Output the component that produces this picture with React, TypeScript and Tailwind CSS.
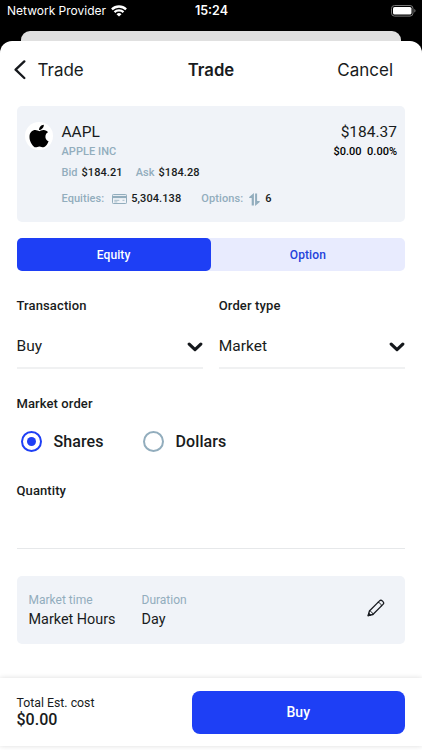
import React, { useState } from 'react';
import { FaApple } from 'react-icons/fa';

const WifiIcon = () => (
  <svg className="ml-[5px] h-[12px] w-[16px]" viewBox="0 0 16 12" fill="none" stroke="white" strokeWidth="2.3">
    <path d="M0.9 4.4a10.2 10.2 0 0 1 14.2 0" />
    <path d="M3.5 7.2a6.5 6.5 0 0 1 9 0" />
    <path d="M8 11.6 5.5 9.2a3.5 3.5 0 0 1 5 0Z" fill="white" stroke="none" />
  </svg>
);

const BatteryIcon = () => (
  <svg className="h-[12px] w-[25px]" viewBox="0 0 25 12" fill="none">
    <rect x="0.5" y="0.5" width="21.5" height="10.6" rx="3" stroke="#777" />
    <rect x="2" y="2" width="18.5" height="7.6" rx="1.6" fill="white" />
    <path d="M23.3 4v3.6c.8-.3 1.2-1 1.2-1.8s-.4-1.5-1.2-1.8Z" fill="#777" />
  </svg>
);

const CardIcon = () => (
  <svg className="h-[10px] w-[15px]" viewBox="0 0 15 10" fill="none" stroke="#92adbd">
    <rect x="0.5" y="0.5" width="14" height="9" rx="0.8" />
    <path d="M0.5 3h14" strokeWidth="2.2" />
    <path d="M2.3 6.3h5M2.3 7.9h3M10.5 6.3h2" strokeWidth="0.8" />
  </svg>
);

const SwapIcon = () => (
  <svg className="h-[13px] w-[11px]" viewBox="0 0 11 13" fill="#92adbd">
    <path d="M4.9 0v12.4H2.7V5H0.2V4Z" />
    <path d="M6.1 13V0.6h2v7.4h2.6V9Z" />
  </svg>
);

const ChevronIcon = () => (
  <svg className="h-[10px] w-[16px]" viewBox="0 0 16 10" fill="none" stroke="#15181c" strokeWidth="3.2" strokeLinecap="round" strokeLinejoin="round">
    <path d="M2.2 2.1 8 7.6l5.8-5.5" />
  </svg>
);

const PencilIcon = () => (
  <svg className="h-[18px] w-[18px]" viewBox="0 0 18 18" fill="none" stroke="#181b20" strokeWidth="1.3" strokeLinejoin="round" strokeLinecap="round">
    <path d="M1.2 16.6 2.4 12 12.5 1.9a2 2 0 0 1 2.8 0l.7.7a2 2 0 0 1 0 2.8L5.9 15.5Z" />
    <path d="M11 3.4c1.9.2 3.2 1.5 3.5 3.5M2.4 12c1.9.2 3.1 1.5 3.5 3.5" strokeWidth="1" />
    <path d="M1.2 16.6l.6-2.2 1.7 1.7Z" fill="#181b20" />
  </svg>
);

const SelectField: React.FC<{ label: string; value: string }> = ({ label, value }) => (
  <div className="flex-1">
    <div className="text-[13px] leading-4 font-medium tracking-[0.12px]">{label}</div>
    <button className="mt-[19px] flex h-[36px] w-full items-center justify-between border-b-2 border-[#f0f1f2] pb-[7px] text-[15.5px]">
      <span className="pt-px">{value}</span>
      <ChevronIcon />
    </button>
  </div>
);

const Radio: React.FC<{ label: string; checked: boolean; onSelect: () => void }> = ({ label, checked, onSelect }) => (
  <button role="radio" aria-checked={checked} onClick={onSelect} className="flex w-[122px] items-center">
    <span className={checked
      ? 'flex size-[21px] items-center justify-center rounded-full border-2 border-[#1e3ff5]'
      : 'flex size-[21px] items-center justify-center rounded-full border-2 border-[#92adbd]'}
    >
      {checked && <span className="size-[9px] rounded-full bg-[#1e3ff5]" />}
    </span>
    <span className="ml-3 pt-px text-[16px] font-medium tracking-[0.1px]">{label}</span>
  </button>
);

const App: React.FC = () => {
  const [unit, setUnit] = useState('shares');

  return (
    <div className="flex h-[750px] w-[422px] flex-col overflow-hidden bg-black font-['Roboto',sans-serif] text-[#181b20]">
      <div className="grid h-[31px] grid-cols-3 items-center pr-[6px] pb-[9px] pl-[7px] font-['Inter',sans-serif] text-white">
        <div className="flex items-center text-[12px] whitespace-nowrap">
          Network Provider
          <WifiIcon />
        </div>
        <div className="text-center text-[12.5px] font-semibold">15:24</div>
        <div className="flex justify-end pb-px"><BatteryIcon /></div>
      </div>
      <div className="mx-[21px] h-[10px] rounded-t-[9px] bg-[#e0e0e0]" />

      <div className="flex flex-1 flex-col rounded-t-[12px] bg-white">
        <header className="grid h-[58px] grid-cols-3 items-center pr-[29px] pl-[14px] font-['Inter',sans-serif] text-[17px]">
          <button className="flex items-center">
            <svg className="h-[20px] w-[12px]" viewBox="0 0 12 20" fill="none" stroke="#15181c" strokeWidth="2.3" strokeLinecap="round" strokeLinejoin="round">
              <path d="M10.3 1.4 1.6 9.7l8.7 8.3" />
            </svg>
            <span className="ml-[11.5px] pt-[2px]">Trade</span>
          </button>
          <h1 className="pt-px pl-[15px] text-center text-[16.7px] font-semibold">Trade</h1>
          <button className="pt-[2px] text-right">Cancel</button>
        </header>

        <main className="flex-1 pt-[7px] pr-[17px] pl-[16.5px]">
          <section className="flex h-[116px] rounded-[5px] bg-[#f0f3f8] pt-4 pr-2 pl-2">
            <div className="flex size-[28px] shrink-0 items-center justify-center rounded-full bg-white">
              <FaApple className="size-[26px] text-black" />
            </div>
            <div className="ml-[9px] flex-1 pt-px">
              <div className="flex justify-between text-[15.5px] leading-[19px]">
                <span>AAPL</span>
                <span>$184.37</span>
              </div>
              <div className="mt-[3px] flex justify-between text-[11px] leading-[14px] font-medium">
                <span className="tracking-[0.05px] text-[#92adbd]">APPLE INC</span>
                <span className="text-black">$0.00&nbsp; 0.00%</span>
              </div>
              <div className="mt-[7px] flex text-[11px] leading-[14px] font-medium">
                <span className="text-[#92adbd]">Bid</span>
                <span className="ml-1 tracking-[0.1px]">$184.21</span>
                <span className="ml-[13px] text-[#92adbd]">Ask</span>
                <span className="ml-1 tracking-[0.1px]">$184.28</span>
              </div>
              <div className="mt-[12px] flex items-center text-[11px] leading-[14px] font-medium">
                <span className="mr-2 tracking-[0.05px] text-[#92adbd]">Equities:</span>
                <CardIcon />
                <span className="ml-1 tracking-[0.1px]">5,304.138</span>
                <span className="mr-[6px] ml-5 tracking-[0.1px] text-[#92adbd]">Options:</span>
                <SwapIcon />
                <span className="ml-[5px]">6</span>
              </div>
            </div>
          </section>

          <div className="mt-4 flex h-[33px] rounded-[5px] bg-[#e8ebfe] text-[12px] font-medium tracking-[0.1px]">
            <button className="flex-1 rounded-[5px] bg-[#1e3ff5] text-white">Equity</button>
            <button className="flex-1 text-[#2541db]">Option</button>
          </div>

          <div className="mt-[27px] flex gap-4">
            <SelectField label="Transaction" value="Buy" />
            <SelectField label="Order type" value="Market" />
          </div>

          <div className="mt-[27px] text-[13px] leading-4 font-medium tracking-[0.1px]">Market order</div>
          <div role="radiogroup" className="mt-[17px] flex pl-1">
            <Radio label="Shares" checked={unit === 'shares'} onSelect={() => setUnit('shares')} />
            <Radio label="Dollars" checked={unit === 'dollars'} onSelect={() => setUnit('dollars')} />
          </div>

          <label className="mt-[29px] block text-[13px] leading-4 font-medium tracking-[0.1px]">
            Quantity
            <input className="block h-[50px] w-full border-b border-[#e6e8ea] outline-none" />
          </label>

          <section className="mt-[27px] flex h-[68px] items-center rounded-[5px] bg-[#f0f3f8] pr-5 pl-3">
            <div className="w-[113px] pt-px">
              <div className="text-[12px] leading-4 text-[#92adbd]">Market time</div>
              <div className="mt-[2px] text-[14.4px] leading-5">Market Hours</div>
            </div>
            <div className="pt-px">
              <div className="text-[12px] leading-4 text-[#92adbd]">Duration</div>
              <div className="mt-[2px] text-[14.4px] leading-5">Day</div>
            </div>
            <button className="ml-auto pb-1"><PencilIcon /></button>
          </section>
        </main>

        <footer className="flex h-[68px] items-center bg-white pr-[17px] pl-[16.5px] shadow-[0_0_5px_rgba(0,0,0,0.14)]">
          <div className="w-[175px]">
            <div className="text-[12.3px] leading-4">Total Est. cost</div>
            <div className="text-[16px] leading-[18px] font-medium">$0.00</div>
          </div>
          <button className="h-[43px] flex-1 rounded-[8px] bg-[#1e3ff5] text-[14px] font-medium text-white">Buy</button>
        </footer>
        <div className="h-1" />
      </div>
    </div>
  );
};

export default App;
